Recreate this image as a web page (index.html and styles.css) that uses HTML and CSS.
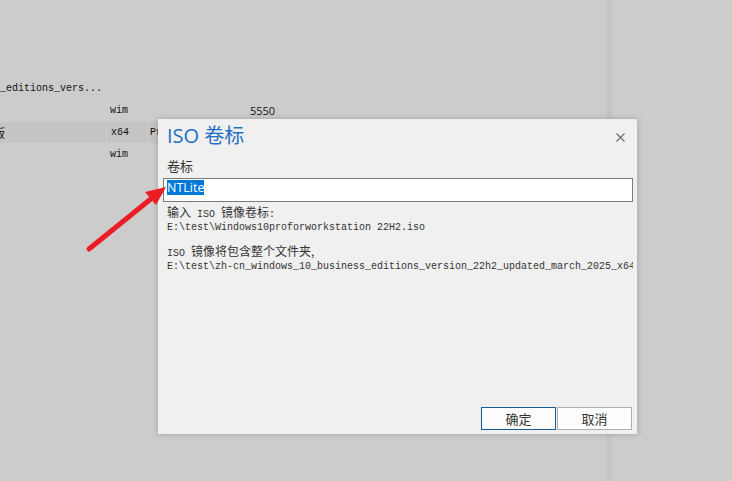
FILE: index.html
```html
<!DOCTYPE html>
<html>
<head>
<meta charset="utf-8">
<link rel="stylesheet" href="styles.css">
</head>
<body>
<div class="desk">
  <div class="list">
    <div class="row"><span class="c1 mono">_editions_vers...</span></div>
    <div class="row"><span class="c1"></span><span class="c2 mono">wim</span><span class="c3"></span><span class="c4">5550</span></div>
    <div class="row sel"><span class="c1 mono"><span class="cut">版</span></span><span class="c2 mono">x64</span><span class="c3 mono">Pro</span></div>
    <div class="row"><span class="c1"></span><span class="c2 mono">wim</span></div>
  </div>
  <div class="split"></div>
  <div class="pane"></div>
</div>

<div class="dialog">
  <div class="titlebar">
    <div class="title">ISO 卷标</div>
    <svg class="close" width="9" height="9" viewBox="0 0 9 9"><path d="M0.5 0.5 L8.5 8.5 M8.5 0.5 L0.5 8.5" stroke="#6e6e6e" stroke-width="1.2" fill="none"/></svg>
  </div>
  <div class="label">卷标</div>
  <div class="input"><span class="selected">NTLite</span></div>
  <div class="info">
    <div class="line"><span class="cjk">输入</span> ISO <span class="cjk">镜像卷标</span>:</div>
    <div class="line">E:\test\Windows10proforworkstation 22H2.iso</div>
    <div class="line"></div>
    <div class="line">ISO <span class="cjk">镜像将包含整个文件夹,</span></div>
    <div class="line">E:\test\zh-cn_windows_10_business_editions_version_22h2_updated_march_2025_x64</div>
  </div>
  <div class="buttons">
    <div class="btn primary">确定</div>
    <div class="btn">取消</div>
  </div>
</div>

<svg class="arrow" width="732" height="481" viewBox="0 0 732 481">
  <line x1="89" y1="249" x2="152" y2="198" stroke="#ec1c24" stroke-width="5" stroke-linecap="round"/>
  <polygon points="166,187 156,205 145,192" fill="#ec1c24"/>
</svg>
</body>
</html>
```

FILE: styles.css
```css
html, body {
  margin: 0;
  padding: 0;
}
body {
  width: 732px;
  height: 481px;
  overflow: hidden;
  background: #cccccc;
  font-family: "Open Sans", "Noto Sans CJK SC", sans-serif;
  color: #111;
}
.desk {
  display: flex;
  height: 481px;
}
.list {
  width: 606px;
  flex: none;
  padding-top: 77px;
}
.split {
  width: 6px;
  flex: none;
  background: #c6c6c6;
}
.pane {
  flex: 1;
}
.row {
  height: 22px;
  display: flex;
  align-items: center;
  white-space: nowrap;
}
.row.sel {
  background: #c4c4c4;
  height: 21px;
  margin-top: 1px;
  align-items: stretch;
}
.row.sel span.c1, .row.sel span.c2, .row.sel span.c3 {
  display: flex;
  align-items: center;
}
.mono {
  font-family: "Liberation Mono", "Noto Sans CJK SC", monospace;
  font-size: 10px;
}
.c1 {
  width: 106px;
  flex: none;
  overflow: hidden;
}
.c2 {
  width: 36px;
  padding-left: 4px;
  flex: none;
}
.c3 {
  width: 96px;
  padding-left: 2px;
  flex: none;
  overflow: hidden;
}
.c4 {
  padding-left: 6px;
  font-size: 11px;
  font-family: "Open Sans", sans-serif;
}
.sel .c1 {
  border-right: 1px solid #cdcdcd;
}
.sel .c2 {
  border-right: 1px solid #cdcdcd;
}
.cut {
  font-size: 12px;
  margin-left: -7px;
}

.dialog {
  position: absolute;
  left: 158px;
  top: 119px;
  width: 479px;
  height: 315px;
  box-sizing: border-box;
  background: #f0f0f0;
  box-shadow: 0 0 6px rgba(0, 0, 0, 0.22);
  padding: 0 4px 4px 5px;
  display: flex;
  flex-direction: column;
  color: #333;
}
.titlebar {
  display: flex;
  justify-content: space-between;
  align-items: flex-start;
  height: 36px;
}
.title {
  font-family: "Open Sans", "Noto Sans CJK SC", sans-serif;
  font-size: 20px;
  line-height: 28px;
  margin-top: 3px;
  padding-left: 4px;
  color: #1f6fc5;
}
.close {
  margin-top: 14px;
  margin-right: 8px;
}
.label {
  font-family: "Noto Sans CJK SC", sans-serif;
  font-size: 13px;
  line-height: 17px;
  padding-left: 4px;
  margin-top: 2px;
}
.input {
  margin-top: 4px;
  height: 24px;
  box-sizing: border-box;
  border: 1px solid #7a7a7a;
  background: #ffffff;
  padding: 1px 0 0 3px;
}
.selected {
  display: inline-block;
  vertical-align: top;
  background: #0078d7;
  color: #fff;
  font-family: "Open Sans", sans-serif;
  font-size: 12.5px;
  line-height: 15px;
  height: 15px;
}
.info {
  margin-top: 2px;
  padding: 4px 0 3px 4px;
  font-family: "Liberation Mono", "Noto Sans CJK SC", monospace;
  font-size: 10px;
  color: #333;
  overflow: hidden;
}
.line {
  height: 13px;
  line-height: 13px;
  white-space: pre;
}
.cjk {
  font-family: "Noto Sans CJK SC", sans-serif;
  font-size: 12px;
  line-height: 0;
}
.buttons {
  margin-top: auto;
  display: flex;
  justify-content: flex-end;
  gap: 1px;
  padding-right: 1px;
}
.btn {
  width: 75px;
  height: 23px;
  box-sizing: border-box;
  border: 1px solid #adadad;
  background: #fdfdfd;
  font-family: "Noto Sans CJK SC", sans-serif;
  font-size: 13px;
  line-height: 21px;
  text-align: center;
  color: #333;
}
.btn.primary {
  border-color: #155a96;
}
.arrow {
  position: absolute;
  left: 0;
  top: 0;
  pointer-events: none;
}
```
